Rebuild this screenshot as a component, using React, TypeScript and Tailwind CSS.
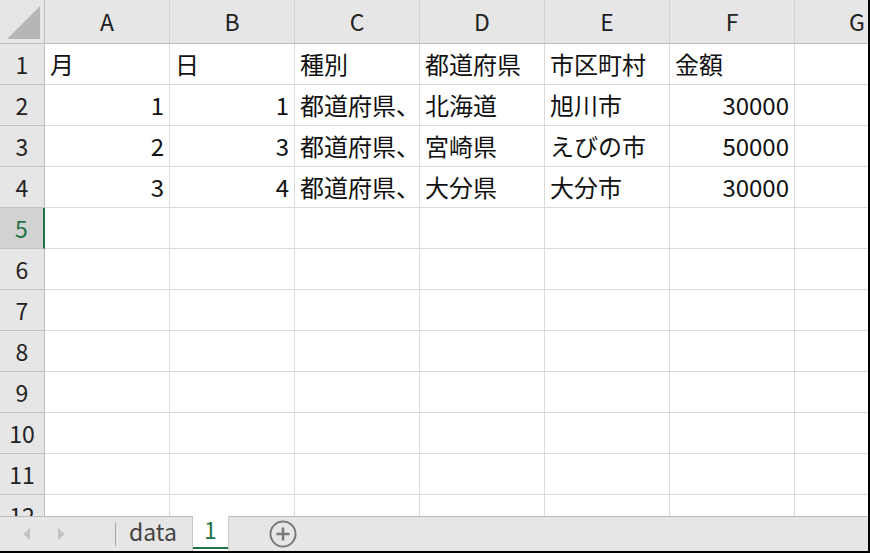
import React from "react";

const COLS = ["A", "B", "C", "D", "E", "F", "G"];

type Cell = { v: string; num?: boolean };

const DATA: Cell[][] = [
  [{ v: "月" }, { v: "日" }, { v: "種別" }, { v: "都道府県" }, { v: "市区町村" }, { v: "金額" }, { v: "" }],
  [{ v: "1", num: true }, { v: "1", num: true }, { v: "都道府県、" }, { v: "北海道" }, { v: "旭川市" }, { v: "30000", num: true }, { v: "" }],
  [{ v: "2", num: true }, { v: "3", num: true }, { v: "都道府県、" }, { v: "宮崎県" }, { v: "えびの市" }, { v: "50000", num: true }, { v: "" }],
  [{ v: "3", num: true }, { v: "4", num: true }, { v: "都道府県、" }, { v: "大分県" }, { v: "大分市" }, { v: "30000", num: true }, { v: "" }],
];

const ROW_COUNT = 12;
const SELECTED_ROW = 5;

function HeaderRow() {
  return (
    <div className="flex h-[44px] shrink-0">
      <div className="w-[45px] shrink-0 bg-[#e6e6e6] border-r border-b border-[#bdbdbd] flex items-end justify-end pr-[2px] pb-[2px]">
        <svg width="36" height="36" viewBox="0 0 36 36">
          <polygon points="1,34 34,34 34,1" fill="#b6b6b6" />
        </svg>
      </div>
      {COLS.map((c) => (
        <div
          key={c}
          className="w-[125px] shrink-0 bg-[#e6e6e6] border-r border-b border-r-[#d2d2d2] border-b-[#bdbdbd] flex items-center justify-center text-[23px] leading-none text-[#222]"
        >
          {c}
        </div>
      ))}
    </div>
  );
}

function SheetRow({ index }: { index: number }) {
  const cells = DATA[index - 1];
  const selected = index === SELECTED_ROW;
  return (
    <div className="flex h-[41px] shrink-0">
      <div
        className={
          selected
            ? "w-[45px] shrink-0 bg-[#d2d2d2] border-b border-[#c6c6c6] border-r-2 border-r-[#217346] flex items-center justify-center text-[23px] leading-none text-[#217346]"
            : "w-[45px] shrink-0 bg-[#e6e6e6] border-b border-[#c6c6c6] border-r border-r-[#bdbdbd] flex items-center justify-center text-[23px] leading-none text-[#222]"
        }
      >
        {index}
      </div>
      {COLS.map((c, i) => {
        const cell = cells ? cells[i] : undefined;
        return (
          <div
            key={c}
            className={
              cell?.num
                ? "w-[125px] shrink-0 border-r border-b border-[#dadada] flex items-center justify-end pr-[5px] text-[24px] leading-none text-[#111] whitespace-nowrap"
                : "w-[125px] shrink-0 border-r border-b border-[#dadada] flex items-center pl-[5px] text-[24px] leading-none text-[#111] whitespace-nowrap"
            }
          >
            {cell?.v}
          </div>
        );
      })}
    </div>
  );
}

function TabBar() {
  return (
    <div className="h-[35px] shrink-0 bg-[#e6e6e6] border-t border-[#bcbcbc] flex items-stretch">
      <div className="w-[116px] flex items-center border-r border-[#a6a6a6] my-[5px]">
        <svg width="10" height="14" viewBox="0 0 10 14" className="ml-[22px]">
          <polygon points="8,1 8,13 1,7" fill="#c4c4c4" />
        </svg>
        <svg width="10" height="14" viewBox="0 0 10 14" className="ml-[24px]">
          <polygon points="2,1 2,13 9,7" fill="#c4c4c4" />
        </svg>
      </div>
      <div className="w-[76px] flex items-center pl-[13px] pb-[5px] text-[23px] leading-none text-[#444]">data</div>
      <div className="w-[37px] -mt-px bg-white border-l border-r border-[#c6c6c6] flex flex-col items-center justify-end">
        <span className="text-[23px] leading-none text-[#217346] mb-[6px]">1</span>
        <div className="w-full h-[2px] bg-[#217346] mb-[2px]" />
      </div>
      <div className="flex items-center ml-[40px]">
        <svg width="28" height="28" viewBox="0 0 28 28">
          <circle cx="14" cy="14" r="12.5" fill="none" stroke="#7a7a7a" strokeWidth="2" />
          <path d="M14 7.5v13M7.5 14h13" stroke="#7a7a7a" strokeWidth="2.6" />
        </svg>
      </div>
    </div>
  );
}

export default function App() {
  return (
    <div
      className="w-[870px] h-[553px] bg-white border-r-2 border-b-2 border-black flex flex-col overflow-hidden"
      style={{ fontFamily: '"Noto Sans CJK JP", "Noto Sans", sans-serif' }}
    >
      <div className="flex-1 overflow-hidden flex flex-col">
        <HeaderRow />
        {Array.from({ length: ROW_COUNT }, (_, i) => (
          <SheetRow key={i} index={i + 1} />
        ))}
      </div>
      <TabBar />
    </div>
  );
}
